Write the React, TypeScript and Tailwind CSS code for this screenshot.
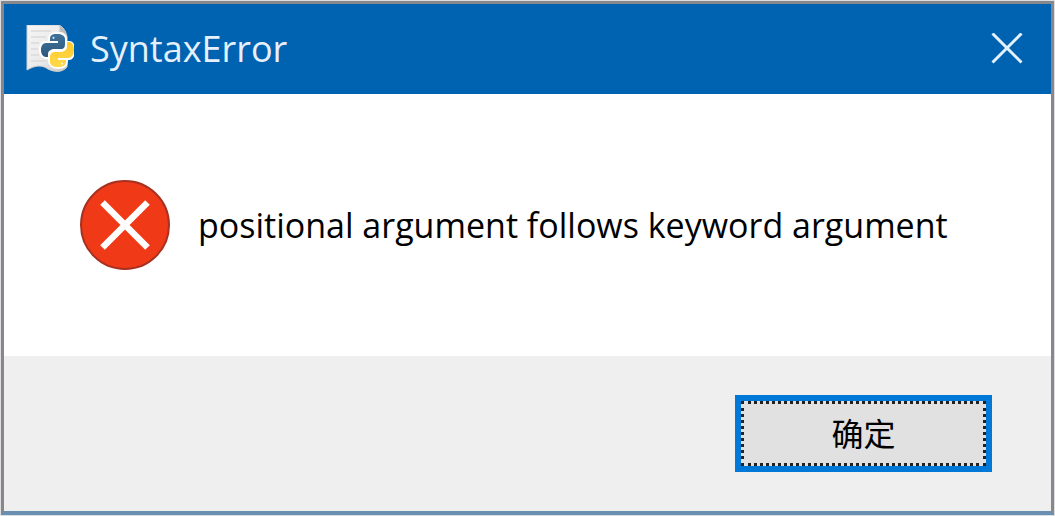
function PythonFileIcon() {
  return (
    <svg viewBox="0 0 48 48" className="size-12 shrink-0" aria-hidden="true">
      <defs>
        <linearGradient id="page" x1="0" y1="0" x2="1" y2="1">
          <stop offset="0" stopColor="#f6f6f6" />
          <stop offset="0.6" stopColor="#e9e9e9" />
          <stop offset="1" stopColor="#c4c4c4" />
        </linearGradient>
        <linearGradient id="blue" x1="0" y1="0" x2="0" y2="1">
          <stop offset="0" stopColor="#3f729b" />
          <stop offset="1" stopColor="#2f587c" />
        </linearGradient>
        <linearGradient id="yellow" x1="0" y1="0" x2="0" y2="1">
          <stop offset="0" stopColor="#ffc92c" />
          <stop offset="1" stopColor="#ffd94a" />
        </linearGradient>
      </defs>
      <path d="M1 0H33C37 2 40 6 41 12V42C36 48 28 47 22 44C15 39 8 41 1 45Z" fill="url(#page)" stroke="#cfcfcf" />
      <path d="M33 0C34 3 34 5 33 7C36 6 39 8 41 12C40 6 37 2 33 0Z" fill="#bcbcbc" />
      <path d="M5 6H25M5 12H20M5 18H13M5 24H12M5 30H13M5 36H20" stroke="#dadada" strokeWidth="1.5" />
      <g fill="#fff" stroke="#fff" strokeWidth="4" strokeLinejoin="round">
        <path d="M31 9C25 9 24 11 24 14V17H32V18H20C16 18 15 22 15 25C15 29 17 32 20 32H23V29C23 26 25 24 29 24H35C38 24 39 22 39 19V14C39 11 36 9 31 9Z" />
        <path d="M41 18V21C41 25 38 27 34 27H29C26 27 24 29 24 32V36C24 39 27 42 32 42C37 42 40 40 40 36V34H32V33H42C46 33 47 29 47 25C47 20 46 18 43 18Z" />
      </g>
      <path
        d="M31 9C25 9 24 11 24 14V16H32V18H20C16 18 15 22 15 25C15 29 17 32 20 32H22V29C22 26 25 24 29 24H35C38 24 39 22 39 19V14C39 11 36 9 31 9Z"
        fill="url(#blue)"
      />
      <path
        d="M41 17V21C41 25 38 27 34 27H29C26 27 24 29 24 32V37C24 40 27 42 32 42C37 42 40 40 40 37V35H32V33H42C46 33 48 29 48 25C48 20 46 17 43 17Z"
        fill="url(#yellow)"
      />
      <circle cx="27.5" cy="12.8" r="1.1" fill="#d5e2ec" />
      <circle cx="36" cy="38.5" r="1.1" fill="#fff6d6" />
    </svg>
  );
}

function ErrorIcon() {
  return (
    <svg viewBox="0 0 90 90" className="size-[90px] shrink-0" role="img" aria-label="Error">
      <circle cx="45" cy="45" r="44" fill="#f03a17" stroke="#a83020" strokeWidth="2" />
      <path d="M22.5 22.5L67.5 67.5M67.5 22.5L22.5 67.5" stroke="#fff" strokeWidth="6.5" />
    </svg>
  );
}

export default function App() {
  return (
    <main className="flex min-h-screen bg-[#dedede] p-px font-['Open_Sans','Noto_Sans_CJK_SC',sans-serif]">
      <section
        role="dialog"
        aria-labelledby="title"
        aria-describedby="message"
        className="flex flex-1 flex-col border-3 border-[#85898d] border-b-4 border-b-[#698fb1] bg-white"
      >
        <header className="flex h-[90px] items-center justify-between bg-[#0063b1] pr-7 pl-[22px]">
          <div className="flex items-center gap-4">
            <PythonFileIcon />
            <h1 id="title" className="text-[36px] leading-10 text-[#e6f0fa]">
              SyntaxError
            </h1>
          </div>
          <button type="button" aria-label="Close" className="text-[#e6f2fb]">
            <svg viewBox="0 0 32 32" className="size-8" aria-hidden="true">
              <path d="M1.5 0.5L30.5 29.5M30.5 0.5L1.5 29.5" stroke="currentColor" strokeWidth="3" />
            </svg>
          </button>
        </header>
        <div className="flex flex-1 items-center gap-7 px-[76px]">
          <ErrorIcon />
          <p id="message" className="text-[34px] leading-10 whitespace-nowrap text-black">
            positional argument follows keyword argument
          </p>
        </div>
        <footer className="flex justify-end bg-[#efefef] px-[59px] py-[39px]">
          <button type="button" className="flex h-[77px] w-[257px] border-6 border-[#0078d7] bg-[#0078d7]">
            <span className="flex flex-1 items-center justify-center self-stretch border-3 border-dotted border-[#222] bg-[#e1e1e1] text-[32px] leading-10 text-black">
              确定
            </span>
          </button>
        </footer>
      </section>
    </main>
  );
}
